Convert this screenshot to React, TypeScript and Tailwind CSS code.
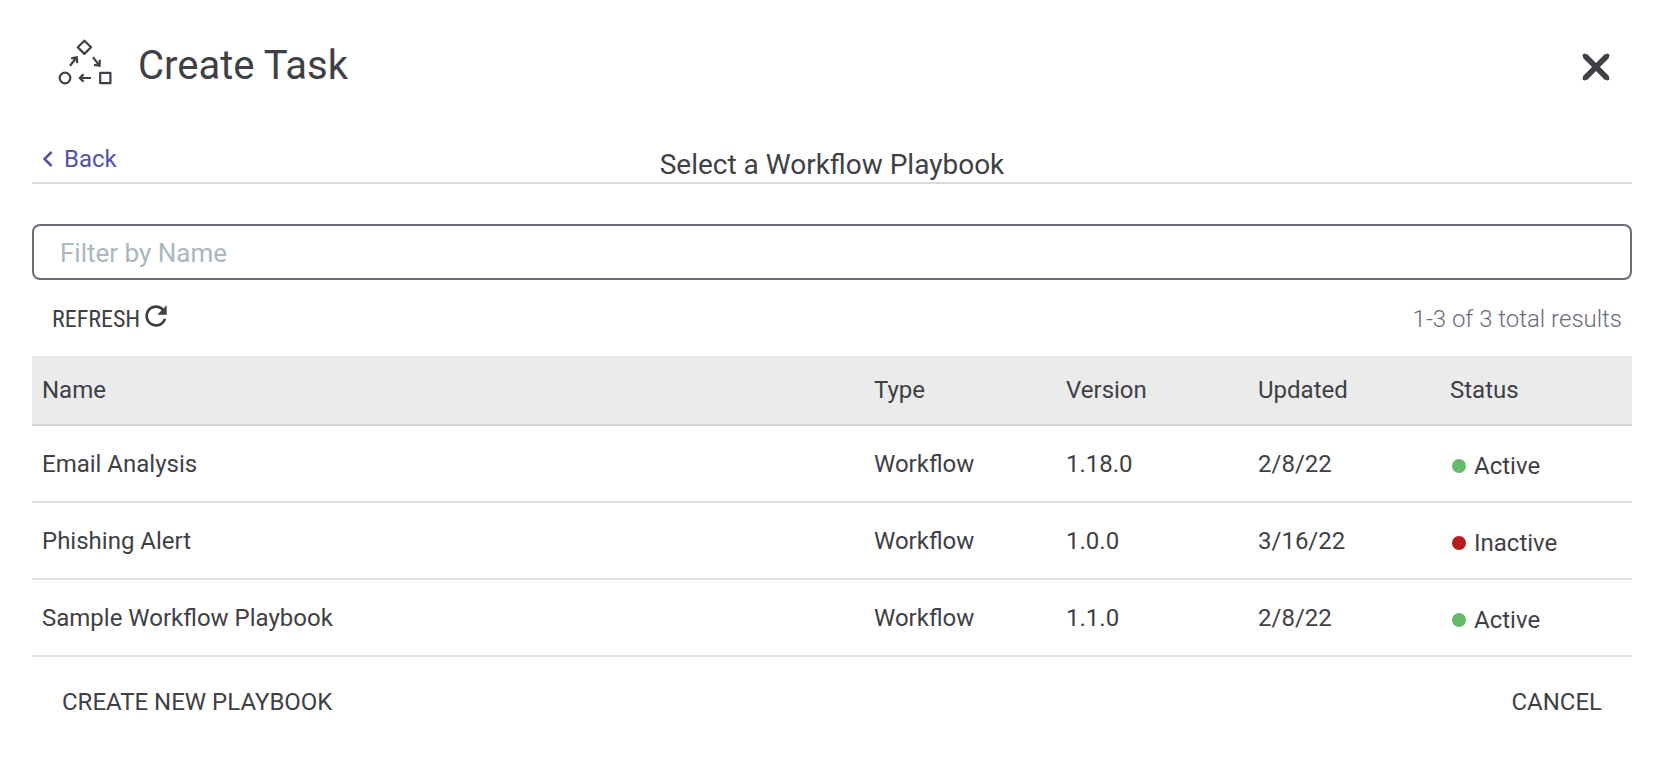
import { MdChevronLeft, MdRefresh } from "react-icons/md";

type Playbook = {
  name: string;
  type: string;
  version: string;
  updated: string;
  active: boolean;
};

const playbooks: Playbook[] = [
  { name: "Email Analysis", type: "Workflow", version: "1.18.0", updated: "2/8/22", active: true },
  { name: "Phishing Alert", type: "Workflow", version: "1.0.0", updated: "3/16/22", active: false },
  { name: "Sample Workflow Playbook", type: "Workflow", version: "1.1.0", updated: "2/8/22", active: true },
];

function WorkflowIcon() {
  return (
    <svg width="56" height="48" viewBox="0 0 56 48" fill="none" stroke="currentColor" strokeWidth="2.2" aria-hidden="true">
      <path d="M27.4 2.7 34 9.3 27.4 15.9 20.8 9.3Z" strokeLinejoin="round" />
      <circle cx="8" cy="40" r="5.3" />
      <rect x="43.2" y="34.8" width="10.2" height="10.4" strokeLinejoin="round" />
      <path d="M34 40H22.6M26.6 36.2 22.8 40l3.8 3.8" />
      <path d="M13 27.8 19.4 19.8M14.2 20.4 19.8 19.4l.4 5.8" />
      <path d="M36 19.2 42.2 27.4M42.8 21.8 42.6 27.8 37 26.8" />
    </svg>
  );
}

function CloseIcon() {
  return (
    <svg width="28" height="28" viewBox="0 0 28 28" fill="none" stroke="currentColor" aria-hidden="true">
      <path d="M2.8 2.8 25.2 25.2M25.2 2.8 2.8 25.2" strokeWidth="5.6" />
      <path d="M2.4 2.4 25.6 25.6M25.6 2.4 2.4 25.6" strokeWidth="3.6" strokeLinecap="round" />
    </svg>
  );
}

function Status({ active }: { active: boolean }) {
  return (
    <span className="flex items-center gap-2 pt-1">
      <span className={active ? "ml-0.5 size-3.5 rounded-full bg-[#66bb6a]" : "ml-0.5 size-3.5 rounded-full bg-[#b71c1c]"} />
      {active ? "Active" : "Inactive"}
    </span>
  );
}

export default function App() {
  return (
    <main className="bg-white px-8 pb-10 font-['Roboto',sans-serif] text-2xl text-[#3f3f46]">
      <header className="flex items-center justify-between pt-9 pr-[18px] pl-[25px]">
        <div className="flex items-center gap-[25px]">
          <span className="pb-2">
            <WorkflowIcon />
          </span>
          <h1 className="text-[40px] leading-[60px]">Create Task</h1>
        </div>
        <button type="button" aria-label="Close" className="px-1 pt-1.5 pb-1">
          <CloseIcon />
        </button>
      </header>

      <nav className="mt-10 grid h-12 grid-cols-[1fr_auto_1fr] items-end border-b-2 border-[#d9d9d9]">
        <a href="#back" className="flex items-center justify-self-start pb-2 leading-[30px] text-[#5552a8]">
          <MdChevronLeft size={32} className="-my-1" aria-hidden="true" />
          Back
        </a>
        <h2 className="pb-px text-[28px] leading-8">Select a Workflow Playbook</h2>
      </nav>

      <input
        type="text"
        aria-label="Filter by Name"
        placeholder="Filter by Name"
        className="mt-10 block h-14 w-full rounded-lg border-2 border-[#6b6c7a] px-[26px] pt-0.5 text-[26px] outline-none placeholder:text-[#a9b8be]"
      />

      <div className="flex h-[76px] items-center justify-between pt-0.5 pr-2.5 pl-5">
        <button type="button" className="flex items-center font-['Roboto_Condensed','Roboto',sans-serif]">
          REFRESH
          <MdRefresh size={32} className="mb-1.5" aria-hidden="true" />
        </button>
        <p className="font-light text-[#6b6c7a]">1-3 of 3 total results</p>
      </div>

      <table className="w-full table-fixed border-separate border-spacing-0 text-left">
        <thead>
          <tr className="h-[70px] bg-[#ebebeb]">
            <th className="w-[52%] border-b-2 border-[#d4d4d4] px-2.5 font-normal">Name</th>
            <th className="w-[12%] border-b-2 border-[#d4d4d4] px-2.5 font-normal">Type</th>
            <th className="w-[12%] border-b-2 border-[#d4d4d4] px-2.5 font-normal">Version</th>
            <th className="w-[12%] border-b-2 border-[#d4d4d4] px-2.5 font-normal">Updated</th>
            <th className="w-[12%] border-b-2 border-[#d4d4d4] px-2.5 font-normal">Status</th>
          </tr>
        </thead>
        <tbody>
          {playbooks.map((p) => (
            <tr key={p.name} className="h-[77px]">
              <td className="border-b-2 border-[#e0e0e0] px-2.5">{p.name}</td>
              <td className="border-b-2 border-[#e0e0e0] px-2.5">{p.type}</td>
              <td className="border-b-2 border-[#e0e0e0] px-2.5">{p.version}</td>
              <td className="border-b-2 border-[#e0e0e0] px-2.5">{p.updated}</td>
              <td className="border-b-2 border-[#e0e0e0] px-2.5">
                <Status active={p.active} />
              </td>
            </tr>
          ))}
        </tbody>
      </table>

      <footer className="flex justify-between px-[30px] pt-[29px]">
        <button type="button">CREATE NEW PLAYBOOK</button>
        <button type="button">CANCEL</button>
      </footer>
    </main>
  );
}
